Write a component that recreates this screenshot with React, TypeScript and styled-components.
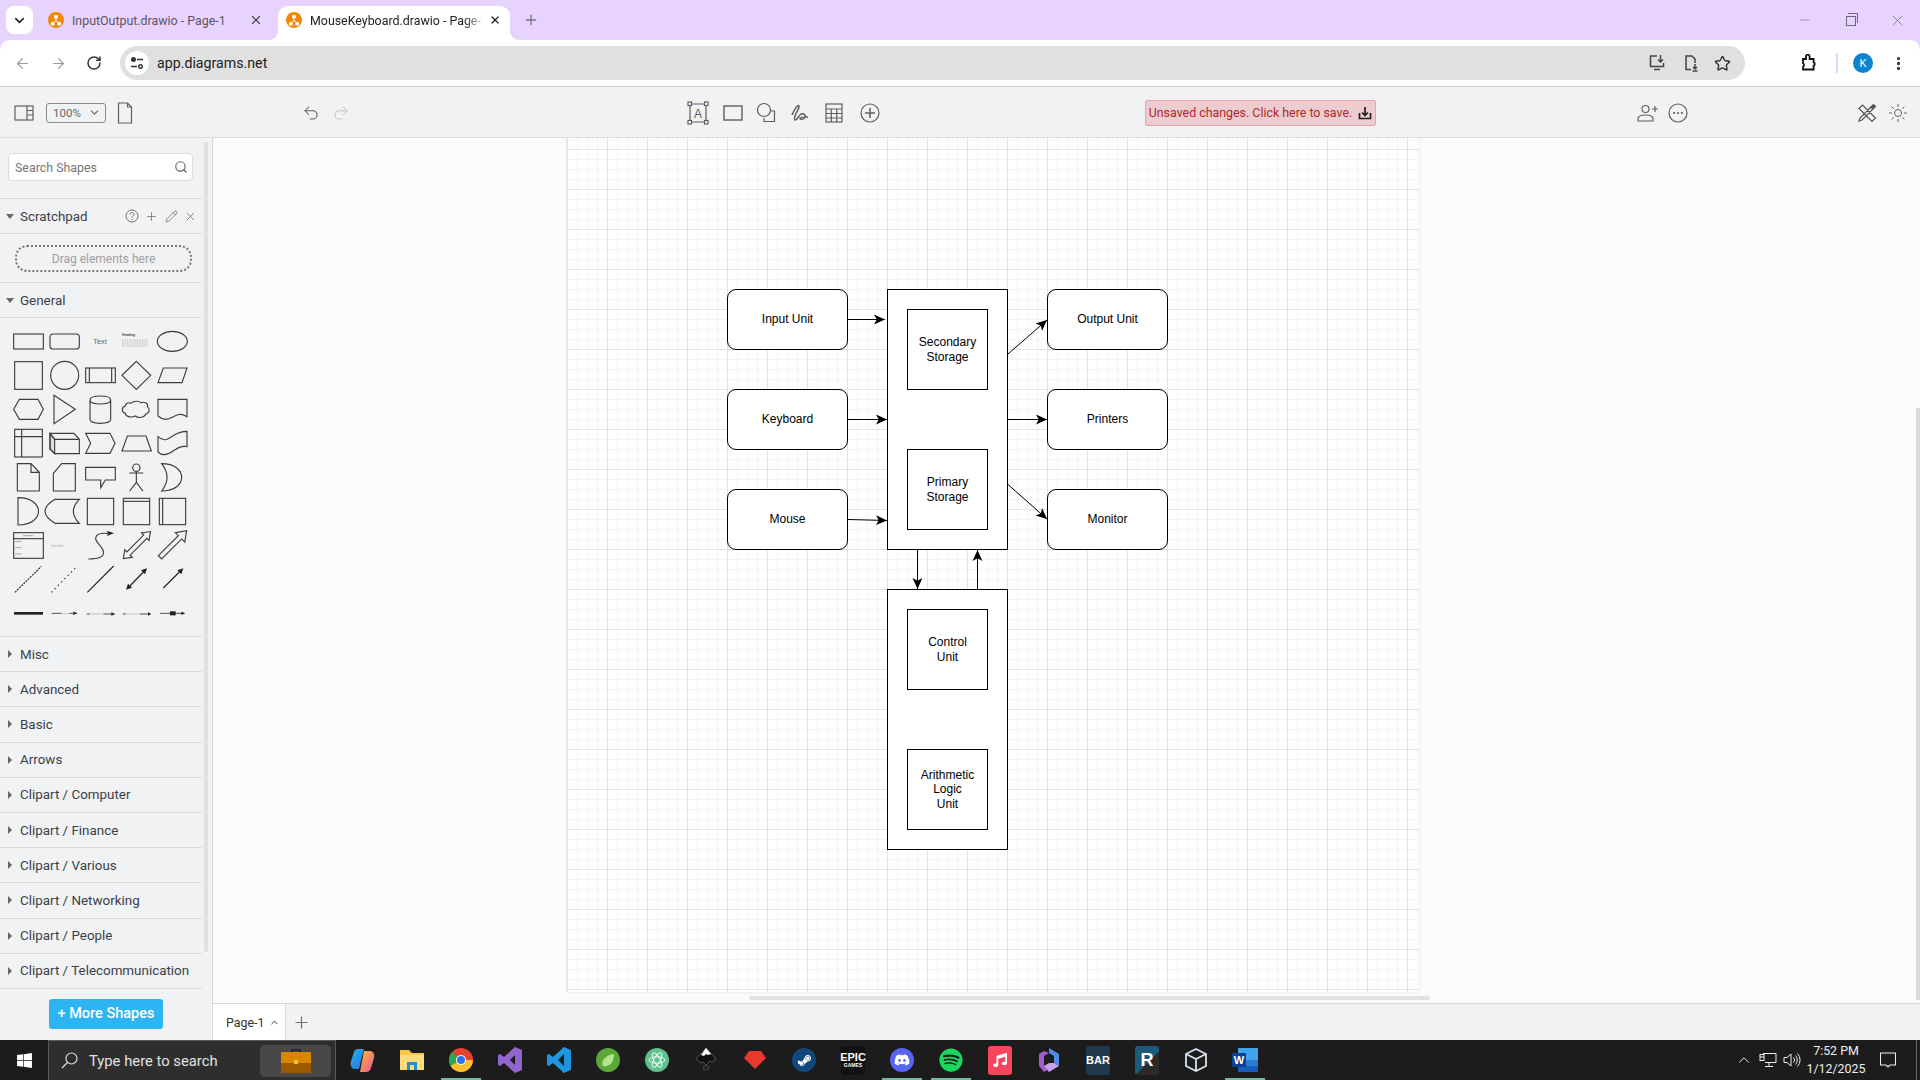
import React from "react"
import styled, { createGlobalStyle } from "styled-components"
import {
  ChevronDown, ChevronUp, X, Plus, ArrowLeft, ArrowRight, RotateCw, Star, MoreVertical,
  Minus, Undo2, Redo2, Search, Pencil,
} from "lucide-react"
import { FaDiscord, FaSpotify, FaSteamSymbol, FaMusic, FaWindows } from "react-icons/fa"

const Global = createGlobalStyle`
  html, body { margin: 0; padding: 0; height: 100%; overflow: hidden; }
  body { font-family: "Roboto", "Liberation Sans", sans-serif; background: #fff; }
  * { box-sizing: border-box; }
`

const Screen = styled.div`
  width: 1920px;
  height: 1080px;
  display: flex;
  flex-direction: column;
  overflow: hidden;
  position: relative;
`

/* browser chrome */
const BrowserTop = styled.div`
  background: #e8d3ff;
  flex: none;
`
const TabStrip = styled.div`
  height: 40px;
  display: flex;
  align-items: flex-end;
  position: relative;
`
const TabSelector = styled.div`
  width: 27px;
  height: 28px;
  margin: 0 7px 6px 6px;
  background: #fff;
  border-radius: 8px;
  display: flex;
  align-items: center;
  justify-content: center;
  color: #222;
`
const Tab = styled.div<{ $active?: boolean }>`
  position: relative;
  width: 232px;
  height: 34px;
  margin-right: ${p => (p.$active ? "0" : "6px")};
  padding: 0 9px 6px 8px;
  display: flex;
  align-items: center;
  gap: 8px;
  border-radius: 10px 10px 0 0;
  background: ${p => (p.$active ? "#fff" : "transparent")};
  color: ${p => (p.$active ? "#222" : "#5a5560")};
  font-family: "Roboto", sans-serif;
  font-size: 12.4px;
  ${p => p.$active && `
    &::before, &::after {
      content: "";
      position: absolute;
      bottom: 0;
      width: 10px;
      height: 10px;
      background: radial-gradient(circle at 0 0, transparent 10px, #fff 10.5px);
    }
    &::before { left: -10px; }
    &::after { right: -10px; background: radial-gradient(circle at 100% 0, transparent 10px, #fff 10.5px); }
  `}
`
const TabTitle = styled.span<{ $fade?: boolean }>`
  flex: 1;
  white-space: nowrap;
  ${p => p.$fade && `
    -webkit-mask-image: linear-gradient(90deg, #000 90%, rgba(0,0,0,.25));
    mask-image: linear-gradient(90deg, #000 90%, rgba(0,0,0,.25));
  `}
`
const NewTab = styled.div`
  margin: 0 0 8px 9px;
  width: 24px;
  height: 24px;
  color: #7c7488;
  display: flex;
  align-items: center;
  justify-content: center;
`
const WindowControls = styled.div`
  margin-left: auto;
  height: 40px;
  display: flex;
  align-items: center;
  color: #6f6878;
`
const WindowButton = styled.div`
  width: 46px;
  display: flex;
  justify-content: center;
`
const RestoreIcon = styled.div`
  width: 10px;
  height: 10px;
  border: 1px solid #6f6878;
  position: relative;
  top: 1px;
  &::after {
    content: "";
    position: absolute;
    top: -4px;
    left: 1px;
    width: 9px;
    height: 9px;
    border: 1px solid #6f6878;
    border-left: none;
    border-bottom: none;
  }
`
const NavBar = styled.div`
  height: 46px;
  background: #fff;
  border-radius: 10px 10px 0 0;
  display: flex;
  align-items: flex-start;
  padding-top: 6px;
`
const NavButton = styled.div<{ $ml?: number; $off?: boolean }>`
  width: 24px;
  height: 34px;
  margin-left: ${p => p.$ml ?? 0}px;
  display: flex;
  align-items: center;
  justify-content: center;
  flex: none;
  color: ${p => (p.$off ? "#9a9a9a" : "#333")};
`
const AddressBar = styled.div`
  width: 1625px;
  margin-left: 14px;
  height: 34px;
  border-radius: 17px;
  background: #e0e0e0;
  display: flex;
  align-items: center;
  padding-left: 5px;
  flex: none;
`
const SiteBadge = styled.div`
  width: 24px;
  height: 24px;
  border-radius: 50%;
  background: #fff;
  display: flex;
  align-items: center;
  justify-content: center;
  margin-right: 8px;
`
const Url = styled.span`
  font-family: "Roboto", sans-serif;
  font-size: 14.2px;
  color: #222;
`
const AddressIcons = styled.div`
  margin-left: auto;
  display: flex;
  align-items: center;
  color: #444;
  padding-right: 11px;
`
const BarSeparator = styled.div`
  width: 2px;
  height: 20px;
  margin: 7px 0 0 15px;
  background: #e8d3ff;
`
const Avatar = styled.div`
  width: 20px;
  height: 20px;
  margin: 7px 0 0 15px;
  border-radius: 50%;
  background: #0a84d0;
  color: #fff;
  font-size: 11px;
  display: flex;
  align-items: center;
  justify-content: center;
`

/* draw.io toolbar */
const Toolbar = styled.div`
  height: 52px;
  flex: none;
  background: #f1f2f4;
  border-top: 1px solid #cfd0d4;
  border-bottom: 1px solid #dcdde0;
  display: flex;
  align-items: center;
  padding: 1px 0 0 12px;
`
const ToolButton = styled.div<{ $ml?: number; $off?: boolean }>`
  width: 24px;
  height: 24px;
  flex: none;
  margin-left: ${p => p.$ml ?? 0}px;
  display: flex;
  align-items: center;
  justify-content: center;
  color: ${p => (p.$off ? "#c4c6ca" : "#5f5f5f")};
`
const ZoomSelect = styled.div`
  width: 60px;
  height: 20px;
  margin-left: 10px;
  border: 1px solid #8a8a8a;
  border-radius: 3px;
  display: flex;
  align-items: center;
  justify-content: space-between;
  padding: 0 4px 0 6px;
  font-size: 11.5px;
  color: #666;
  flex: none;
`
const SaveNotice = styled.div`
  width: 231px;
  height: 26px;
  margin-left: 263px;
  flex: none;
  background: #eccccf;
  border: 1px solid #e2a5ac;
  border-radius: 2px;
  color: #b3262c;
  font-family: "Roboto", sans-serif;
  font-size: 12.4px;
  display: flex;
  align-items: center;
  justify-content: center;
  gap: 6px;
  white-space: nowrap;
`

/* main area */
const Main = styled.div`
  flex: 1;
  min-height: 0;
  display: flex;
`
const Sidebar = styled.aside`
  width: 213px;
  flex: none;
  background: #f1f2f4;
  border-right: 1px solid #d8d9dc;
  display: flex;
  flex-direction: column;
  position: relative;
  overflow: hidden;
  padding-right: 10px;
`
const SideScroll = styled.div`
  position: absolute;
  right: 4px;
  top: 4px;
  width: 4px;
  height: 810px;
  background: #e0e0e0;
  border-radius: 2px;
`
const SearchWrap = styled.div`
  height: 61px;
  padding: 15px 0 0 8px;
  border-bottom: 1px solid #dadbde;
  flex: none;
`
const SearchBox = styled.div`
  width: 185px;
  height: 28px;
  background: #fff;
  border: 1px solid #dcdcdc;
  border-radius: 4px;
  padding: 0 4px 0 6px;
  display: flex;
  align-items: center;
  justify-content: space-between;
  color: #777;
  font-size: 12.4px;
`
const SectionRow = styled.div<{ $h?: number }>`
  height: ${p => p.$h ?? 35}px;
  flex: none;
  border-bottom: 1px solid #dadbde;
  display: flex;
  align-items: center;
  padding-left: 6px;
  color: #3a3f48;
  font-size: 13.4px;
`
const Caret = styled.span<{ $open?: boolean }>`
  width: 0;
  height: 0;
  flex: none;
  margin-right: ${p => (p.$open ? "6px" : "8px")};
  margin-left: ${p => (p.$open ? "0" : "2px")};
  ${p => p.$open
    ? `border-left: 4px solid transparent; border-right: 4px solid transparent; border-top: 5px solid #666;`
    : `border-top: 4px solid transparent; border-bottom: 4px solid transparent; border-left: 4px solid #666;`}
`
const RowTools = styled.div`
  margin-left: auto;
  margin-right: 5px;
  display: flex;
  align-items: center;
  gap: 6.5px;
  color: #707070;
`
const DragWrap = styled.div`
  height: 49px;
  flex: none;
  padding: 11px 0 0 15px;
  border-bottom: 1px solid #dadbde;
`
const DragBox = styled.div`
  width: 177px;
  height: 27px;
  border: 2px dotted #777;
  border-radius: 12px;
  color: #a0a0a0;
  font-size: 12px;
  display: flex;
  align-items: center;
  justify-content: center;
`
const Palette = styled.div`
  height: 319px;
  flex: none;
  border-bottom: 1px solid #dadbde;
  overflow: hidden;
`
const MoreWrap = styled.div`
  flex: 1;
  padding: 10px 0 0 49px;
`
const MoreButton = styled.div`
  width: 114px;
  height: 30px;
  border-radius: 3px;
  background: #2cb5f2;
  color: #fff;
  font-size: 14.5px;
  font-weight: 500;
  display: flex;
  align-items: center;
  justify-content: center;
`
const Workspace = styled.div`
  flex: 1;
  min-width: 0;
  display: flex;
  flex-direction: column;
`
const Canvas = styled.div`
  flex: 1;
  min-height: 0;
  position: relative;
  background: #fbfbfb;
  overflow: hidden;
  padding-left: 354px;
`
const Page = styled.div`
  position: relative;
  width: 852px;
  height: 854px;
  background-color: #fff;
  box-shadow: 0 0 3px rgba(0, 0, 0, 0.12);
  background-image:
    linear-gradient(#e2e2e2 1px, transparent 1px),
    linear-gradient(90deg, #e2e2e2 1px, transparent 1px),
    linear-gradient(#f4f4f4 1px, transparent 1px),
    linear-gradient(90deg, #f4f4f4 1px, transparent 1px);
  background-size: 40px 40px, 40px 40px, 10px 10px, 10px 10px;
  background-position: 0 11px, 0 0, 0 1px, 0 0;
`
const Node = styled.div<{ $x: number; $y: number; $w: number; $h: number; $round?: boolean }>`
  position: absolute;
  left: ${p => p.$x}px;
  top: ${p => p.$y}px;
  width: ${p => p.$w}px;
  height: ${p => p.$h}px;
  background: #fff;
  border: 1px solid #000;
  border-radius: ${p => (p.$round ? "9px" : "0")};
  display: flex;
  align-items: center;
  justify-content: center;
  text-align: center;
  font-family: "Liberation Sans", Arial, sans-serif;
  font-size: 12px;
  line-height: 14.5px;
  color: #000;
`
const Connectors = styled.svg`
  position: absolute;
  inset: 0;
  width: 100%;
  height: 100%;
  overflow: visible;
`
const HScroll = styled.div`
  position: absolute;
  left: 536px;
  bottom: 3px;
  width: 681px;
  height: 4px;
  border-radius: 2px;
  background: #e2e2e2;
`
const VScroll = styled.div`
  position: absolute;
  right: 0;
  top: 270px;
  width: 4px;
  height: 592px;
  background: #dcdcdc;
`
const PageBar = styled.div`
  height: 37px;
  flex: none;
  background: #f1f2f4;
  border-top: 1px solid #d8d9dc;
  display: flex;
  align-items: stretch;
`
const PageTab = styled.div`
  width: 73px;
  background: #fff;
  border-right: 1px solid #dcdde0;
  display: flex;
  align-items: center;
  padding-left: 13px;
  gap: 5px;
  font-family: "Roboto", sans-serif;
  font-size: 12.4px;
  color: #333;
`
const AddPage = styled.div`
  width: 30px;
  display: flex;
  align-items: center;
  justify-content: center;
  color: #707070;
`

/* windows taskbar */
const Taskbar = styled.div`
  height: 40px;
  flex: none;
  background: #1c1c1c;
  display: flex;
  align-items: stretch;
  color: #fff;
`
const StartButton = styled.div`
  width: 48px;
  display: flex;
  align-items: center;
  justify-content: center;
  flex: none;
`
const TaskSearch = styled.div`
  width: 288px;
  flex: none;
  background: #2e2e2e;
  border: 1px solid #5a5a5a;
  border-bottom: none;
  display: flex;
  align-items: center;
  padding-left: 12px;
  font-family: "Roboto", sans-serif;
  font-size: 14.8px;
  color: #e2e2e2;
`
const SearchLabel = styled.span`
  margin-left: 11px;
`
const SearchHighlight = styled.div`
  margin-left: auto;
  margin-right: 4px;
  width: 71px;
  height: 32px;
  border-radius: 5px;
  background: #484848;
  display: flex;
  align-items: center;
  justify-content: center;
  padding-right: 0;
`
const TaskIcons = styled.div`
  display: flex;
  margin-left: 2.5px;
`
const TaskSlot = styled.div<{ $open?: boolean }>`
  width: 49px;
  display: flex;
  align-items: center;
  justify-content: center;
  position: relative;
  ${p => p.$open && `
    &::after {
      content: "";
      position: absolute;
      left: 4px;
      right: 5px;
      bottom: 0;
      height: 2px;
      background: #76b9a0;
    }
  `}
`
const RoundIcon = styled.div<{ $bg: string }>`
  width: 24px;
  height: 24px;
  border-radius: 50%;
  background: ${p => p.$bg};
  display: flex;
  align-items: center;
  justify-content: center;
`
const SquareTile = styled.div<{ $bg: string }>`
  width: 24px;
  height: 29px;
  border-radius: 3px;
  background: ${p => p.$bg};
  display: flex;
  flex-direction: column;
  align-items: center;
  justify-content: center;
  color: #fff;
  font-family: "Liberation Sans", sans-serif;
  font-weight: 700;
  line-height: 1;
`
const TileText = styled.span<{ $size: number }>`
  font-size: ${p => p.$size}px;
`
const Tray = styled.div`
  margin-left: auto;
  display: flex;
  align-items: stretch;
`
const TrayIcon = styled.div`
  width: 24px;
  display: flex;
  align-items: center;
  justify-content: center;
`
const Clock = styled.div`
  width: 64px;
  display: flex;
  flex-direction: column;
  align-items: center;
  justify-content: center;
  font-family: "Roboto", sans-serif;
  font-size: 12.4px;
  line-height: 18px;
  color: #eee;
  white-space: nowrap;
`
const NotifyIcon = styled.div`
  width: 40px;
  display: flex;
  align-items: center;
  justify-content: center;
`
const ShowDesktop = styled.div`
  width: 4px;
  border-left: 1px solid #666;
  margin-left: 8px;
`

function DrawioIcon() {
  return (
    <svg width="16" height="16" viewBox="0 0 16 16" style={{ flex: "none" }}>
      <circle cx="8" cy="8" r="8" fill="#f08705" />
      <path d="M8 6v2.5M8 8.500L4.800 11M8 8.500l3.200 2.500" stroke="#fff" strokeWidth="1" fill="none" />
      <rect x="6.200" y="3" width="3.600" height="3.300" rx=".5" fill="#fff" />
      <rect x="3" y="10.200" width="3.600" height="3.300" rx=".5" fill="#fff" />
      <rect x="9.400" y="10.200" width="3.600" height="3.300" rx=".5" fill="#fff" />
    </svg>
  )
}

const I = { fill: "none", stroke: "currentColor", strokeWidth: 1.2 }

function Palettes() {
  const s = { fill: "none", stroke: "#3c3c3c", strokeWidth: 3.4 }
  const t = { fill: "none", stroke: "#222", strokeWidth: 3.4 }
  return (
    <svg width="220" height="319" viewBox="0 -6 660 957" style={{ display: "block" }}>
      <g {...s}>
        <rect x="41" y="42" width="89" height="45" />
        <rect x="150" y="42" width="88" height="45" rx="10" />
        <ellipse cx="517" cy="64" rx="45" ry="30" />
        <rect x="44" y="125" width="83" height="83" />
        <circle cx="194" cy="166" r="42" />
        <rect x="257" y="144" width="89" height="44" />
        <path d="M268 144v44M335 144v44" />
        <path d="M409 124l43 42-43 42-43-42zM474 188l16-44h71l-15 44z" />
        <path d="M41 268l17-30h56l16 30-16 30H58zM162 226l64 42-64 43z" />
        <path d="M270 240c0-16 62-16 62 0v58c0 16-62 16-62 0zM270 240c0 16 62 16 62 0" />
        <path d="M392 250c10-8 24-8 30-2 12-4 24 2 20 12 8 6 8 18-4 22-4 10-22 14-32 6-14 6-30 2-30-8-12-4-12-18 0-22 0-8 8-12 16-8z" />
        <path d="M474 238h87v52c-20-12-30-6-44 2-14 8-30 8-43-4z" />
        <rect x="44" y="328" width="83" height="83" />
        <path d="M65 328v83M44 350h83" />
        <path d="M164 358v43l-14-14v-47z" fill="#ddd" />
        <path d="M150 340h72l16 18v43h-74l-14-14zM164 358h74M150 340l14 18" />
        <path d="M257 340h73l15 30-15 30h-73l15-30zM366 393l16-45h56l16 45z" />
        <path d="M474 350c20 18 32 6 44-2 14-10 28-14 43-14v46c-20-4-30 6-43 14-14 10-30 16-44 2z" />
        <path d="M52 431h41l25 26v56H52zM93 431v26h25" />
        <path d="M160 460l25-29h41v82h-66zM257 442h89v38h-30l-14 23v-23h-45z" />
        <circle cx="409" cy="443" r="11" />
        <path d="M409 454v33M388 459h42M409 487l-20 26M409 487l20 26" />
        <path d="M485 431c80 0 80 82 0 82 22-28 22-54 0-82zM54 533c82 0 82 82 0 82zM165 538h73c-24 24-24 48 0 72h-73c-40-24-40-48 0-72z" />
        <rect x="262" y="535" width="79" height="79" />
        <rect x="370" y="535" width="79" height="79" />
        <path d="M370 544h79" />
        <rect x="478" y="535" width="79" height="79" />
        <path d="M488 535v79" />
        <rect x="41" y="638" width="89" height="77" />
        <path d="M41 656h89" />
        <path d="M265 717c30 0 50-6 45-24-5-18-32-30-20-46 4-6 20-8 34-7" />
        <path d="M0 0L22-16V-7H93V-16L115 0 93 16V7H22V16z" transform="translate(370 716) rotate(-45)" />
        <path d="M0-7H85V-20L113 0 85 20V7H0z" transform="translate(480 712) rotate(-45)" />
      </g>
      <path d="M342 640l-22-8 5 8-5 8z" fill="#222" />
      <text x="300" y="72" fontSize="22" fill="#666" textAnchor="middle" fontFamily="Liberation Sans">Text</text>
      <text x="366" y="48" fontSize="10" fontWeight="700" fill="#444" fontFamily="Liberation Sans">Heading</text>
      <path d="M366 60h80M366 66h80M366 72h80M366 78h80" stroke="#9a9a9a" strokeWidth="2" strokeDasharray="3 2" />
      <path d="M46 664h18M46 683h18M46 702h18M70 647h30" stroke="#888" strokeWidth="3" strokeDasharray="3 1" />
      <text x="153" y="681" fontSize="10" fill="#999" fontFamily="Liberation Sans">List Item</text>
      <g {...t}>
        <path d="M45 817l79-78" strokeDasharray="6 3" />
        <path d="M154 817l75-76" strokeDasharray="4 10" />
        <path d="M262 817l79-79M384 804l52-54M490 804l54-54" />
      </g>
      <path d="M378 809l6-18 12 12zM441 745l-6 18-12-12zM550 745l-6 18-12-12z" fill="#222" />
      <path d="M42 880h87" stroke="#222" strokeWidth="8" />
      <g stroke="#333" strokeWidth="2.500" fill="none">
        <path d="M155 880h30M208 880h22M260 882h10M310 882h30M368 882h10M420 882h28M480 880h70" />
        <path d="M188 881h18M272 882h36M380 882h38" stroke="#999" strokeDasharray="3 2" />
      </g>
      <path d="M232 880l-14-6 4 6-4 6zM346 882l-12-5v10zM454 882l-10-5v10zM556 880l-12-5v10z" fill="#222" />
      <rect x="510" y="874" width="17" height="12" fill="#222" />
    </svg>
  )
}

function Arrow({ d }: { d: string }) {
  return <path d={d} fill="none" stroke="#000" strokeWidth="1" markerEnd="url(#classic)" />
}

function Diagram() {
  return (
    <Page>
      <Node $round $x={160} $y={151} $w={121} $h={61}>Input Unit</Node>
      <Node $round $x={160} $y={251} $w={121} $h={61}>Keyboard</Node>
      <Node $round $x={160} $y={351} $w={121} $h={61}>Mouse</Node>
      <Node $x={320} $y={151} $w={121} $h={261} />
      <Node $x={340} $y={171} $w={81} $h={81}>Secondary<br />Storage</Node>
      <Node $x={340} $y={311} $w={81} $h={81}>Primary<br />Storage</Node>
      <Node $x={320} $y={451} $w={121} $h={261} />
      <Node $x={340} $y={471} $w={81} $h={81}>Control<br />Unit</Node>
      <Node $x={340} $y={611} $w={81} $h={81}>Arithmetic<br />Logic<br />Unit</Node>
      <Node $round $x={480} $y={151} $w={121} $h={61}>Output Unit</Node>
      <Node $round $x={480} $y={251} $w={121} $h={61}>Printers</Node>
      <Node $round $x={480} $y={351} $w={121} $h={61}>Monitor</Node>
      <Connectors>
        <defs>
          <marker id="classic" viewBox="0 0 10 10" refX="10" refY="5" markerWidth="11" markerHeight="11" markerUnits="userSpaceOnUse" orient="auto">
            <path d="M10 5L0 .5 2.500 5 0 9.500z" fill="#000" />
          </marker>
        </defs>
        <Arrow d="M281 181.500H318" />
        <Arrow d="M281 281.500H320" />
        <Arrow d="M281 381.500L320 382.500" />
        <Arrow d="M441 216L480 182" />
        <Arrow d="M441 281.500H480" />
        <Arrow d="M441 346.500L480 381" />
        <Arrow d="M350.500 412V451" />
        <Arrow d="M410.500 451V412" />
      </Connectors>
    </Page>
  )
}

const sections = ["Misc", "Advanced", "Basic", "Arrows", "Clipart / Computer", "Clipart / Finance", "Clipart / Various", "Clipart / Networking", "Clipart / People", "Clipart / Telecommunication"]

export default function App() {
  return (
    <Screen>
      <Global />
      <BrowserTop>
        <TabStrip>
          <TabSelector><ChevronDown size={15} strokeWidth={2.5} /></TabSelector>
          <Tab>
            <DrawioIcon />
            <TabTitle>InputOutput.drawio - Page-1</TabTitle>
            <X size={14} strokeWidth={2} color="#444" />
          </Tab>
          <Tab $active>
            <DrawioIcon />
            <TabTitle $fade>MouseKeyboard.drawio - Page-</TabTitle>
            <X size={14} strokeWidth={2.4} color="#222" />
          </Tab>
          <NewTab><Plus size={16} /></NewTab>
          <WindowControls>
            <WindowButton><Minus size={14} strokeWidth={1} /></WindowButton>
            <WindowButton><RestoreIcon /></WindowButton>
            <WindowButton><X size={17} strokeWidth={1} /></WindowButton>
          </WindowControls>
        </TabStrip>
        <NavBar>
          <NavButton $ml={10} $off><ArrowLeft size={17} strokeWidth={1.6} /></NavButton>
          <NavButton $ml={12} $off><ArrowRight size={17} strokeWidth={1.6} /></NavButton>
          <NavButton $ml={12}><RotateCw size={16} strokeWidth={2.2} /></NavButton>
          <AddressBar>
            <SiteBadge>
              <svg width="14" height="14" viewBox="0 0 14 14" fill="none" stroke="#333" strokeWidth="1.400">
                <circle cx="3.500" cy="3.500" r="1.800" fill="#333" />
                <path d="M7 3.500h6M1 10.500h6" />
                <circle cx="10.500" cy="10.500" r="1.800" />
              </svg>
            </SiteBadge>
            <Url>app.diagrams.net</Url>
            <AddressIcons>
              <NavButton>
                <svg width="18" height="18" viewBox="0 0 18 18" fill="none" stroke="#444" strokeWidth="1.500">
                  <path d="M9 2H2.500v10.500h13V9M6 15.500h6" />
                  <path d="M12.500 1v7M10 5.500l2.500 2.500L15 5.500" />
                </svg>
              </NavButton>
              <NavButton $ml={10}>
                <svg width="18" height="18" viewBox="0 0 18 18" fill="none" stroke="#444" strokeWidth="1.500">
                  <path d="M9 15.500H4V2h6l3 3v4" />
                  <path d="M13 10v5M11 13l2 2 2-2M10.500 17h5" />
                </svg>
              </NavButton>
              <NavButton $ml={7}><Star size={17} strokeWidth={2} /></NavButton>
            </AddressIcons>
          </AddressBar>
          <NavButton $ml={52}>
            <svg width="18" height="18" viewBox="0 0 18 18" fill="none" stroke="#111" strokeWidth="1.800">
              <path d="M3 5h3V2.500a1.800 1.800 0 0 1 3.600 0V5h4v3.300a1.800 1.800 0 0 1 0 3.400V15.500H3v-2.800a1.900 1.900 0 0 0 0-3.400z" />
            </svg>
          </NavButton>
          <BarSeparator />
          <Avatar>K</Avatar>
          <NavButton $ml={13}><MoreVertical size={17} strokeWidth={2.6} color="#333" /></NavButton>
        </NavBar>
      </BrowserTop>

      <Toolbar>
        <ToolButton>
          <svg width="20" height="16" viewBox="0 0 20 16" {...I}>
            <rect x="1" y="1" width="18" height="14" />
            <path d="M13 1v14M13 5.500h6M13 10h6" />
          </svg>
        </ToolButton>
        <ZoomSelect>100%<ChevronDown size={13} /></ZoomSelect>
        <ToolButton $ml={7}>
          <svg width="16" height="22" viewBox="0 0 16 22" {...I}>
            <path d="M1.500 1h9l4 4v16h-13zM10.500 1v4h4" />
          </svg>
        </ToolButton>
        <ToolButton $ml={162}><Undo2 size={18} strokeWidth={1.4} /></ToolButton>
        <ToolButton $ml={6} $off><Redo2 size={18} strokeWidth={1.4} /></ToolButton>
        <ToolButton $ml={333}>
          <svg width="22" height="24" viewBox="0 0 22 24" {...I}>
            <path d="M3 3h16v18H3z" />
            <g fill="#fff"><rect x="1" y="1" width="3.500" height="3.500" /><rect x="17.500" y="1" width="3.500" height="3.500" /><rect x="1" y="19.500" width="3.500" height="3.500" /><rect x="17.500" y="19.500" width="3.500" height="3.500" /></g>
            <text x="11" y="16.500" textAnchor="middle" fontSize="12" stroke="none" fill="currentColor" fontFamily="Liberation Sans">A</text>
          </svg>
        </ToolButton>
        <ToolButton $ml={11}>
          <svg width="20" height="16" viewBox="0 0 20 16" {...I} strokeWidth={1.4}><rect x="1" y="1" width="18" height="14" /></svg>
        </ToolButton>
        <ToolButton $ml={9}>
          <svg width="20" height="22" viewBox="0 0 20 22" {...I}>
            <circle cx="8" cy="8" r="6.500" />
            <path d="M15 9h3.500v10.500H8V16" />
          </svg>
        </ToolButton>
        <ToolButton $ml={10}>
          <svg width="20" height="20" viewBox="0 0 20 20" {...I} strokeWidth={1.5}>
            <path d="M2 12C4 7 8 1 9 3c1 3-7 11-4 14 2 1 3-4 6-6 3-1 5 1 4 3-1 3-5 3-5 1 0-1 4-1 8-1" />
          </svg>
        </ToolButton>
        <ToolButton $ml={10}>
          <svg width="18" height="20" viewBox="0 0 18 20" {...I}>
            <rect x="1" y="1" width="16" height="18" />
            <path d="M1 6h16M1 10.500h16M1 15h16M6.300 6v13M11.700 6v13" />
          </svg>
        </ToolButton>
        <ToolButton $ml={12}>
          <svg width="20" height="20" viewBox="0 0 20 20" {...I}>
            <circle cx="10" cy="10" r="9" />
            <path d="M10 5v10M5 10h10" strokeWidth={1.5} />
          </svg>
        </ToolButton>
        <SaveNotice>
          Unsaved changes. Click here to save.
          <svg width="14" height="14" viewBox="0 0 14 14" fill="none" stroke="#222" strokeWidth="1.700">
            <path d="M1.500 7v5.500h11V7M7 1v8M4 6.500L7 9.500l3-3" />
          </svg>
        </SaveNotice>
        <ToolButton $ml={260}>
          <svg width="22" height="20" viewBox="0 0 22 20" {...I}>
            <circle cx="8.500" cy="6" r="3.500" />
            <path d="M1 18v-2c0-3 3-4 7.500-4s7.500 1 7.500 4v2zM15 6h6M18 3v6" />
          </svg>
        </ToolButton>
        <ToolButton $ml={6}>
          <svg width="20" height="20" viewBox="0 0 20 20" {...I} strokeLinecap="round">
            <circle cx="10" cy="10" r="9" />
            <path d="M6 10h.3M9.900 10h.3M13.700 10h.3" strokeWidth={1.8} />
          </svg>
        </ToolButton>
        <ToolButton $ml={165}>
          <svg width="20" height="20" viewBox="0 0 20 20" fill="none" stroke="#555" strokeWidth="1.200">
            <path d="M2 5.500L5.500 2 18.500 15 15 18.500zM14 4L3 15l-1 3 3-1L16 6z" />
            <path d="M14 4l2 2 2.500-2.500-2-2z" fill="#555" />
          </svg>
        </ToolButton>
        <ToolButton $ml={7}>
          <svg width="20" height="20" viewBox="0 0 20 20" fill="none" stroke="#666" strokeWidth="1">
            <circle cx="10" cy="10" r="3.500" />
            <path d="M10 1v3M10 16v3M1 10h3M16 10h3M3.600 3.600l2 2M14.400 14.400l2 2M3.600 16.400l2-2M14.400 5.600l2-2" />
          </svg>
        </ToolButton>
      </Toolbar>

      <Main>
        <Sidebar>
          <SearchWrap>
            <SearchBox>Search Shapes<Search size={14} color="#666" /></SearchBox>
          </SearchWrap>
          <SectionRow>
            <Caret $open />Scratchpad
            <RowTools>
              <svg width="14" height="14" viewBox="0 0 14 14" fill="none" stroke="#707070" strokeWidth="1">
                <circle cx="7" cy="7" r="6" />
                <path d="M5 5.500c0-2.500 4-2.500 4 0 0 1.500-2 1.500-2 3M7 10v1" />
              </svg>
              <Plus size={13} strokeWidth={1.5} />
              <Pencil size={13} strokeWidth={1.5} />
              <X size={13} strokeWidth={1.5} />
            </RowTools>
          </SectionRow>
          <DragWrap><DragBox>Drag elements here</DragBox></DragWrap>
          <SectionRow><Caret $open />General</SectionRow>
          <Palette><Palettes /></Palette>
          {sections.map(name => (
            <SectionRow key={name} $h={35.2}><Caret />{name}</SectionRow>
          ))}
          <MoreWrap><MoreButton>+ More Shapes</MoreButton></MoreWrap>
          <SideScroll />
        </Sidebar>
        <Workspace>
          <Canvas>
            <Diagram />
            <HScroll />
            <VScroll />
          </Canvas>
          <PageBar>
            <PageTab>Page-1<ChevronUp size={11} strokeWidth={2} /></PageTab>
            <AddPage><Plus size={19} strokeWidth={1.5} /></AddPage>
          </PageBar>
        </Workspace>
      </Main>

      <Taskbar>
        <StartButton><FaWindows size={17} /></StartButton>
        <TaskSearch>
          <svg width="17" height="17" viewBox="0 0 17 17" fill="none" stroke="#ddd" strokeWidth="1.200">
            <circle cx="10.500" cy="6.500" r="5.500" />
            <path d="M6.500 10.500L1 16" />
          </svg>
          <SearchLabel>Type here to search</SearchLabel>
          <SearchHighlight>
            <svg width="30" height="26" viewBox="0 0 30 26">
              <path d="M11 5V2h8v3" fill="none" stroke="#222" strokeWidth="1.500" />
              <rect x="0" y="4" width="30" height="21" rx="1" fill="#d98500" />
              <rect x="0" y="15" width="30" height="10" fill="#9c5a00" />
              <rect x="13" y="12" width="4" height="4" fill="#f2c530" />
            </svg>
          </SearchHighlight>
        </TaskSearch>
        <TaskIcons>
          <TaskSlot>
            <svg width="26" height="26" viewBox="0 0 26 26">
              <defs>
                <linearGradient id="cp1" x1="0" y1="0" x2="1" y2="1"><stop offset="0" stopColor="#1fb6e8" /><stop offset="1" stopColor="#2f6fe0" /></linearGradient>
                <linearGradient id="cp2" x1="0" y1="0" x2="1" y2="1"><stop offset="0" stopColor="#f8c030" /><stop offset="1" stopColor="#ec4f9c" /></linearGradient>
              </defs>
              <path d="M8 2h6l-5 20H5C1 22 0 18 1 14L4 5c.5-2 2-3 4-3z" fill="url(#cp1)" />
              <path d="M14 4h6c3 0 5 3 4 7l-3 10c-1 3-3 4-5 4h-6l4-21z" fill="url(#cp2)" />
            </svg>
          </TaskSlot>
          <TaskSlot>
            <svg width="24" height="22" viewBox="0 0 24 22">
              <path d="M0 1h9l3 3h12v17H0z" fill="#f6c744" />
              <rect x="0" y="6" width="24" height="15" fill="#fbdc7c" />
              <rect x="7" y="13" width="10" height="8" fill="#1f8fdc" />
              <rect x="10" y="16" width="4" height="5" fill="#fbdc7c" />
            </svg>
          </TaskSlot>
          <TaskSlot $open>
            <svg width="24" height="24" viewBox="0 0 24 24">
              <circle cx="12" cy="12" r="12" fill="#e5432f" />
              <path d="M12 12L1.600 18A12 12 0 0 1 3 4z" fill="#2fa84f" />
              <path d="M12 12h12a12 12 0 0 1-22.400 6z" fill="#fbc02d" />
              <path d="M12 7a5 5 0 1 0 0 10 5 5 0 0 0 0-10z" fill="#fff" />
              <circle cx="12" cy="12" r="4" fill="#2a76e8" />
            </svg>
          </TaskSlot>
          <TaskSlot>
            <svg width="24" height="28" viewBox="0 0 24 28">
              <path d="M17 1l7 3v20l-7 3-11-10-4 3-2-1V9l2-1 4 3zM17 9l-5 5 5 5z" fill="#9065d0" />
            </svg>
          </TaskSlot>
          <TaskSlot>
            <svg width="24" height="28" viewBox="0 0 24 28">
              <path d="M17 1l7 3v20l-7 3-11-10-4 3-2-1V9l2-1 4 3zM17 8l-6 6 6 6z" fill="#1f95e0" />
            </svg>
          </TaskSlot>
          <TaskSlot>
            <RoundIcon $bg="#5aa83c">
              <svg width="16" height="16" viewBox="0 0 16 16"><path d="M14 2C14 12 8 15 3 14 0 9 6 3 14 2z" fill="#b6e48a" /></svg>
            </RoundIcon>
          </TaskSlot>
          <TaskSlot>
            <RoundIcon $bg="#5fc08e">
              <svg width="18" height="18" viewBox="0 0 18 18" fill="none" stroke="#e6fff0" strokeWidth="1">
                <ellipse cx="9" cy="9" rx="8" ry="3.200" />
                <ellipse cx="9" cy="9" rx="8" ry="3.200" transform="rotate(60 9 9)" />
                <ellipse cx="9" cy="9" rx="8" ry="3.200" transform="rotate(120 9 9)" />
              </svg>
            </RoundIcon>
          </TaskSlot>
          <TaskSlot>
            <svg width="22" height="26" viewBox="0 0 22 26">
              <path d="M11 1l10 11-4 3-2-1-4 4-3-3-2 1-5-4z" fill="#111" stroke="#555" />
              <path d="M11 1l5 6-3 1-2-1-2 2-3-1z" fill="#fff" />
              <path d="M8 19h6l-1 4H9z" fill="#222" stroke="#444" />
            </svg>
          </TaskSlot>
          <TaskSlot>
            <svg width="24" height="20" viewBox="0 0 24 20"><path d="M6 1h12l5 7-11 11L1 8z" fill="#e8392c" /></svg>
          </TaskSlot>
          <TaskSlot>
            <RoundIcon $bg="#10487c"><FaSteamSymbol size={15} color="#fff" /></RoundIcon>
          </TaskSlot>
          <TaskSlot>
            <SquareTile $bg="#111">
              <TileText $size={11}>EPIC</TileText>
              <TileText $size={5}>GAMES</TileText>
            </SquareTile>
          </TaskSlot>
          <TaskSlot $open>
            <RoundIcon $bg="#5865f2"><FaDiscord size={16} color="#fff" /></RoundIcon>
          </TaskSlot>
          <TaskSlot $open><FaSpotify size={24} color="#1ed760" /></TaskSlot>
          <TaskSlot>
            <SquareTile $bg="#f8455e"><FaMusic size={14} color="#fff" /></SquareTile>
          </TaskSlot>
          <TaskSlot>
            <svg width="22" height="26" viewBox="0 0 22 26">
              <path d="M11 1l10 6v12l-5-3V9L11 6z" fill="#4f8de8" />
              <path d="M1 7l5-3 5 2-5 3v10l5 3-5 3-5-6z" fill="#a05ed0" />
              <path d="M6 19l5-3 5 0 5 3-10 6z" fill="#c8a0e8" />
            </svg>
          </TaskSlot>
          <TaskSlot>
            <SquareTile $bg="#22384c"><TileText $size={11}>BAR</TileText></SquareTile>
          </TaskSlot>
          <TaskSlot>
            <SquareTile $bg="linear-gradient(135deg, #1b5a7a 55%, #2a2a2a 55%)"><TileText $size={18}>R</TileText></SquareTile>
          </TaskSlot>
          <TaskSlot>
            <svg width="24" height="26" viewBox="0 0 24 26" fill="none" stroke="#d8e4f0" strokeWidth="1.800">
              <path d="M12 2l10 5v12l-10 5-10-5V7zM2 7l10 5 10-5M12 12v12" />
            </svg>
          </TaskSlot>
          <TaskSlot $open>
            <svg width="26" height="24" viewBox="0 0 26 24">
              <rect x="6" y="0" width="20" height="24" rx="1" fill="#41a5ee" />
              <rect x="6" y="12" width="20" height="6" fill="#2b7cd3" />
              <rect x="6" y="18" width="20" height="6" fill="#185abd" />
              <rect x="0" y="5" width="14" height="14" rx="1" fill="#103f91" />
              <text x="7" y="16" textAnchor="middle" fontSize="11" fontWeight="700" fill="#fff" fontFamily="Liberation Sans">W</text>
            </svg>
          </TaskSlot>
        </TaskIcons>
        <Tray>
          <TrayIcon><ChevronUp size={18} strokeWidth={1.2} /></TrayIcon>
          <TrayIcon>
            <svg width="18" height="16" viewBox="0 0 18 16" fill="none" stroke="#eee" strokeWidth="1">
              <path d="M4 1.500h13v9H6M10 10.500v3.500M6 14.500h8" />
              <rect x="1" y="2.500" width="4" height="6" />
              <path d="M1 5h4" />
            </svg>
          </TrayIcon>
          <TrayIcon>
            <svg width="18" height="16" viewBox="0 0 18 16" fill="none" stroke="#eee" strokeWidth="1">
              <path d="M1 5.500h3L8 2v12l-4-3.500H1zM10.500 5.500a3.500 3.500 0 0 1 0 5M12.500 3.500a6.500 6.500 0 0 1 0 9M14.500 1.500a9.500 9.500 0 0 1 0 13" />
            </svg>
          </TrayIcon>
          <Clock><span>7:52 PM</span><span>1/12/2025</span></Clock>
          <NotifyIcon>
            <svg width="16" height="16" viewBox="0 0 16 16" fill="none" stroke="#eee" strokeWidth="1.100">
              <path d="M.5 1h15v12H10l-2 2-2-2H.5z" />
            </svg>
          </NotifyIcon>
          <ShowDesktop />
        </Tray>
      </Taskbar>
    </Screen>
  )
}
